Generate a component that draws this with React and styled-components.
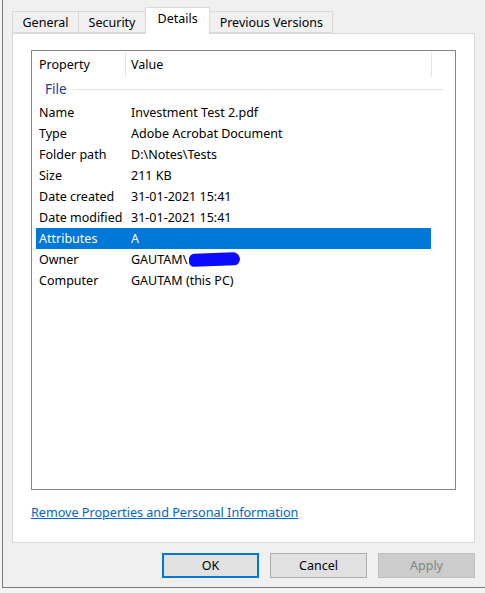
import React from "react";
import styled, { createGlobalStyle } from "styled-components";

const Global = createGlobalStyle`
  html, body {
    margin: 0;
    padding: 0;
    background: #f4f4f4;
    font-family: "Noto Sans", "Open Sans", Arial, sans-serif;
    font-size: 12px;
  }
`;

const Dialog = styled.div`
  margin-left: 2px;
  width: 483px;
  height: 588px;
  box-sizing: border-box;
  background: #f0f0f0;
  border-left: 1px solid #7a7a7a;
  border-bottom: 1px solid #7a7a7a;
  padding: 7px 0 0 9px;
  display: flex;
  flex-direction: column;
`;

const TabStrip = styled.div`
  display: flex;
  align-items: flex-end;
  height: 26px;
  position: relative;
  z-index: 1;
`;

const Tab = styled.div`
  box-sizing: border-box;
  height: ${(p) => (p.$active ? "27px" : "22px")};
  padding: ${(p) => (p.$active ? "3px 11.5px 0" : "3px 9.5px 0")};
  margin-bottom: ${(p) => (p.$active ? "-1px" : "0")};
  background: ${(p) => (p.$active ? "#ffffff" : "#f0f0f0")};
  border: 1px solid #d9d9d9;
  border-bottom: ${(p) => (p.$active ? "none" : "1px solid #d9d9d9")};
  margin-left: ${(p) => (p.$first ? "0" : "-1px")};
  color: #000;
  font-size: 12.5px;
  line-height: 15px;
  white-space: nowrap;
`;

const Panel = styled.div`
  width: 463px;
  height: 510px;
  box-sizing: border-box;
  background: #fff;
  border: 1px solid #d9d9d9;
  padding: 16px 0 0 18px;
  display: flex;
  flex-direction: column;
`;

const ListBox = styled.div`
  width: 425px;
  height: 440px;
  box-sizing: border-box;
  border: 1px solid #828790;
  background: #fff;
  padding: 1px 0 0 5px;
`;

const HeaderRow = styled.div`
  display: flex;
  height: 25px;
  align-items: stretch;
`;

const HeaderCell = styled.div`
  width: ${(p) => p.$w}px;
  box-sizing: border-box;
  padding-left: ${(p) => p.$pl || 2}px;
  padding-top: 4px;
  border-right: ${(p) => (p.$divider ? "1px solid #e5e5e5" : "none")};
  font-size: 12.5px;
  color: #000;
`;

const GroupRow = styled.div`
  display: flex;
  align-items: center;
  height: 23px;
  padding-left: 8px;
  gap: 6px;
`;

const GroupTitle = styled.span`
  color: #1e3c96;
  font-size: 13.5px;
`;

const GroupLine = styled.div`
  flex: 0 0 370px;
  height: 1px;
  background: #e2e3ea;
  margin-top: 1px;
`;

const Rows = styled.div`
  margin-top: 2px;
  display: flex;
  flex-direction: column;
`;

const Row = styled.div`
  display: flex;
  align-items: center;
  height: 21px;
  width: 395px;
  margin-left: -1px;
  padding-left: 3px;
  box-sizing: border-box;
  background: ${(p) => (p.$selected ? "#0078d7" : "transparent")};
  color: ${(p) => (p.$selected ? "#fff" : "#000")};
  font-size: 12.5px;
  white-space: nowrap;
`;

const NameCell = styled.div`
  width: 92px;
  flex-shrink: 0;
`;

const ValueCell = styled.div`
  display: flex;
  align-items: center;
`;

const Redaction = styled.span`
  display: inline-block;
  width: 51px;
  height: 13px;
  margin-left: 2px;
  background: #0a0aff;
  border-radius: 7px 9px 8px 6px;
  transform: rotate(-2deg);
`;

const LinkText = styled.a`
  margin-top: 14px;
  color: #0066cc;
  text-decoration: underline;
  font-size: 12.6px;
  cursor: pointer;
  align-self: flex-start;
`;

const ButtonBar = styled.div`
  display: flex;
  justify-content: flex-end;
  gap: 11px;
  padding: 10px 0 0 0;
  width: 463px;
`;

const Button = styled.div`
  box-sizing: border-box;
  width: 97px;
  height: 25px;
  display: flex;
  align-items: center;
  justify-content: center;
  font-size: 12.5px;
  background: ${(p) => (p.$disabled ? "#cccccc" : "#e1e1e1")};
  color: ${(p) => (p.$disabled ? "#838383" : "#000")};
  border: ${(p) =>
    p.$default ? "2px solid #0078d7" : p.$disabled ? "1px solid #bfbfbf" : "1px solid #adadad"};
`;

const rows = [
  ["Name", "Investment Test 2.pdf"],
  ["Type", "Adobe Acrobat Document"],
  ["Folder path", "D:\\Notes\\Tests"],
  ["Size", "211 KB"],
  ["Date created", "31-01-2021 15:41"],
  ["Date modified", "31-01-2021 15:41"],
  ["Attributes", "A", true],
  ["Owner", "GAUTAM\\", false, true],
  ["Computer", "GAUTAM (this PC)"],
];

export default function App() {
  return (
    <>
      <Global />
      <Dialog>
        <TabStrip>
          <Tab $first>General</Tab>
          <Tab>Security</Tab>
          <Tab $active>Details</Tab>
          <Tab>Previous Versions</Tab>
        </TabStrip>
        <Panel>
          <ListBox>
            <HeaderRow>
              <HeaderCell $w={89} $divider>
                Property
              </HeaderCell>
              <HeaderCell $w={306} $pl={5} $divider>
                Value
              </HeaderCell>
            </HeaderRow>
            <GroupRow>
              <GroupTitle>File</GroupTitle>
              <GroupLine />
            </GroupRow>
            <Rows>
              {rows.map(([name, value, selected, redacted]) => (
                <Row key={name} $selected={selected}>
                  <NameCell>{name}</NameCell>
                  <ValueCell>
                    {value}
                    {redacted && <Redaction />}
                  </ValueCell>
                </Row>
              ))}
            </Rows>
          </ListBox>
          <LinkText>Remove Properties and Personal Information</LinkText>
        </Panel>
        <ButtonBar>
          <Button $default>OK</Button>
          <Button>Cancel</Button>
          <Button $disabled>Apply</Button>
        </ButtonBar>
      </Dialog>
    </>
  );
}
